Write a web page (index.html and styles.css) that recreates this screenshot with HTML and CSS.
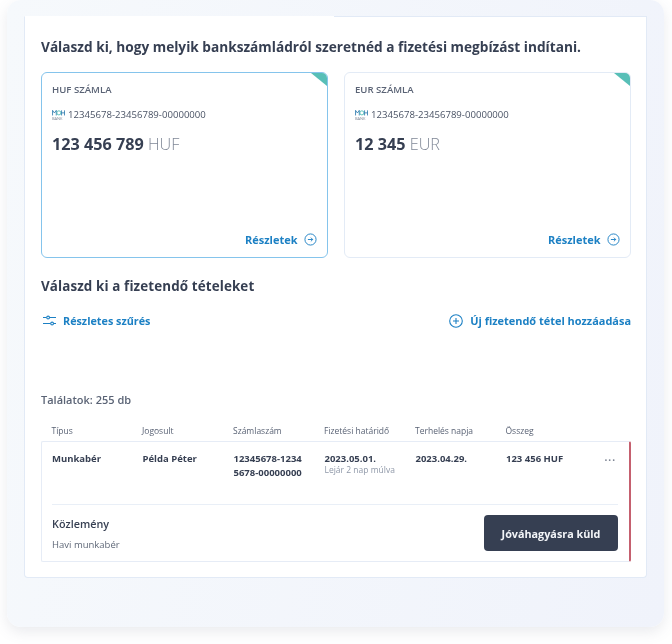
FILE: index.html
```html
<!DOCTYPE html>
<html lang="hu">
<head>
<meta charset="utf-8">
<title>Fizetési megbízás</title>
<link rel="stylesheet" href="styles.css">
</head>
<body>
<div class="panel">
  <main class="sheet">
    <h1 class="title">Válaszd ki, hogy melyik bankszámládról szeretnéd a fizetési megbízást indítani.</h1>
    <div class="accounts">
      <section class="account selected">
        <span class="corner"></span>
        <div class="acc-name">HUF SZÁMLA</div>
        <div class="acc-number">
          <svg class="logo" viewBox="0 0 14 12"><path class="logo-m" d="M.6 6.5V1l2 2.8L4.6 1v5.500"/><circle class="logo-b" cx="7.400" cy="3.700" r="2.200"/><path class="logo-m" d="M10.300 1v5.500M13.500 1v5.500M10.300 3.700h3.200"/><text class="logo-bank" x="0" y="11.600">BANK</text></svg>
          <span>12345678-23456789-00000000</span>
        </div>
        <div class="balance"><b>123 456 789</b> <span>HUF</span></div>
        <a class="details">Részletek
          <svg class="ico" viewBox="0 0 14 14"><circle cx="7" cy="7" r="6"/><path d="M4.2 7h5.2M7.4 5l2 2-2 2"/></svg>
        </a>
      </section>
      <section class="account">
        <span class="corner"></span>
        <div class="acc-name">EUR SZÁMLA</div>
        <div class="acc-number">
          <svg class="logo" viewBox="0 0 14 12"><path class="logo-m" d="M.6 6.5V1l2 2.8L4.6 1v5.500"/><circle class="logo-b" cx="7.400" cy="3.700" r="2.200"/><path class="logo-m" d="M10.300 1v5.500M13.500 1v5.500M10.300 3.700h3.200"/><text class="logo-bank" x="0" y="11.600">BANK</text></svg>
          <span>12345678-23456789-00000000</span>
        </div>
        <div class="balance"><b>12 345</b> <span>EUR</span></div>
        <a class="details">Részletek
          <svg class="ico" viewBox="0 0 14 14"><circle cx="7" cy="7" r="6"/><path d="M4.2 7h5.2M7.4 5l2 2-2 2"/></svg>
        </a>
      </section>
    </div>
    <h2 class="subtitle">Válaszd ki a fizetendő tételeket</h2>
    <div class="actions">
      <a class="action">
        <svg class="filter" viewBox="0 0 13 11"><path d="M0 2.500h3.600M6.600 2.500h6.400M0 8.500h7.600M10.600 8.500h2.400"/><circle cx="5.100" cy="2.500" r="1.400"/><circle cx="9.100" cy="8.500" r="1.400"/></svg>
        Részletes szűrés
      </a>
      <a class="action wide">
        <svg class="plus" viewBox="0 0 14 14"><circle cx="7" cy="7" r="6.300"/><path d="M7 4v6M4 7h6"/></svg>
        Új fizetendő tétel hozzáadása
      </a>
    </div>
    <div class="hits">Találatok: 255 db</div>
    <div class="cols head">
      <span>Típus</span><span>Jogosult</span><span>Számlaszám</span><span>Fizetési határidő</span><span>Terhelés napja</span><span>Összeg</span>
    </div>
    <article class="row">
      <div class="cols values">
        <span>Munkabér</span>
        <span>Példa Péter</span>
        <span>12345678-1234<br>5678-00000000</span>
        <span>2023.05.01.<small>Lejár 2 nap múlva</small></span>
        <span>2023.04.29.</span>
        <span>123 456 HUF</span>
        <i class="more">···</i>
      </div>
      <div class="row-foot">
        <div>
          <div class="memo-label">Közlemény</div>
          <div class="memo">Havi munkabér</div>
        </div>
        <button class="send">Jóváhagyásra küld</button>
      </div>
    </article>
  </main>
</div>
</body>
</html>
```
FILE: styles.css
```css
* { box-sizing: border-box; }
html, body { margin: 0; background: #fff; }
body { width: 672px; height: 644px; overflow: hidden; font-family: "Open Sans", sans-serif; color: #363f52; }
.panel {
  margin-left: 7px; width: 657px; height: 627px; padding: 16px 17px 0;
  border-radius: 14px;
  background: linear-gradient(100deg, #f6f9fc, #f0f3fb);
  box-shadow: 0 5px 14px rgba(90, 100, 120, .13);
  filter: blur(.3px);
}
.sheet {
  position: relative;
  width: 623px; height: 562px; padding: 20px 15px 0 16px; background: #fff;
  border: 1px solid #e2eaf6; border-top-color: #fff; border-radius: 0 0 4px 4px;
}
.sheet::before { content: ""; position: absolute; top: -1px; right: -1px; width: 313px; height: 1px; background: #e2eaf6; }
.title { margin: 0; font-size: 13.67px; line-height: 19px; font-weight: 700; color: #363f52; }
.accounts { display: flex; gap: 16px; margin-top: 16px; }
.account {
  position: relative; width: 287px; height: 186px; padding: 10px 10px 0; background: #fff;
  border: 1px solid #e3ebf6; border-radius: 6px; overflow: hidden;
  display: flex; flex-direction: column;
}
.account.selected { border-color: #85c4ec; }
.corner { position: absolute; top: 0; right: 0; border-style: solid; border-width: 0 16px 13px 0; border-color: transparent #58bfb7 transparent transparent; }
.acc-name { font-size: 9.6px; line-height: 14px; font-weight: 600; color: #5a6375; }
.acc-number { display: flex; align-items: center; gap: 3px; margin-top: 11px; font-size: 9.6px; line-height: 14px; color: #4a5365; }
.logo { width: 13px; height: 12px; }
.logo-m { fill: none; stroke: #2a78ad; stroke-width: .9; }
.logo-b { fill: none; stroke: #3fb6b0; stroke-width: .9; }
.logo-bank { font-size: 4.3px; fill: #7f8796; }
.balance { margin-top: 11px; font-size: 16.2px; line-height: 22px; color: #363f52; }
.balance b { font-weight: 700; }
.balance span { font-weight: 300; color: #7f8796; }
.details { margin: auto .5px 10px 0; align-self: flex-end; display: flex; align-items: center; gap: 6px; font-size: 11px; line-height: 15px; font-weight: 700; color: #1c80c4; }
.ico { width: 13px; height: 13px; fill: none; stroke: #1c80c4; stroke-width: 1; }
.subtitle { margin: 19px 0 0; font-size: 13.4px; line-height: 19px; font-weight: 700; color: #363f52; letter-spacing: .12px; }
.actions { display: flex; justify-content: space-between; margin-top: 17px; }
.action { display: flex; align-items: center; font-size: 10.8px; line-height: 15px; font-weight: 700; color: #1c80c4; }
.action.wide { font-size: 10.95px; }
.filter { width: 13px; height: 11px; margin: 0 7px 0 2px; fill: #fff; stroke: #1c80c4; stroke-width: 1.1; }
.plus { width: 14px; height: 14px; margin-right: 7px; fill: none; stroke: #1c80c4; stroke-width: 1.1; }
.hits { margin-top: 64px; font-size: 11px; line-height: 15px; font-weight: 600; color: #5a6375; }
.cols { display: grid; grid-template-columns: 90.5px 91px 91px 91px 90.5px 1fr; }
.head { margin-top: 18px; height: 16px; padding: 0 10.5px; font-size: 8.5px; line-height: 12px; color: #5a6375; }
.row { position: relative; width: 590px; height: 121px; background: #fff; border: 1px solid #e6ecf6; border-right: 2px solid #c5606f; border-radius: 2px; }
.values { padding: 10px 10px 0; height: 62px; font-size: 9.5px; line-height: 14px; font-weight: 700; color: #363f52; }
.values span { display: block; }
.values small { display: block; font-size: 8.5px; line-height: 11px; font-weight: 400; color: #8f98a8; margin-top: -2px; }
.more { position: absolute; top: 10px; right: 13px; font-style: normal; font-size: 10px; line-height: 16px; letter-spacing: 1px; color: #7a8291; }
.row-foot { margin: 0 11px 0 10px; padding-top: 10px; border-top: 1px solid #e9eff7; display: flex; justify-content: space-between; }
.memo-label { margin-top: 1px; font-size: 10.8px; line-height: 16px; font-weight: 600; color: #363f52; }
.memo { margin-top: 6px; font-size: 9.5px; line-height: 14px; color: #5f6878; }
.send { width: 134px; height: 36px; border: 0; border-radius: 4px; background: #363f52; color: #f3f5f8; font-family: inherit; font-size: 10.8px; font-weight: 700; }
```
